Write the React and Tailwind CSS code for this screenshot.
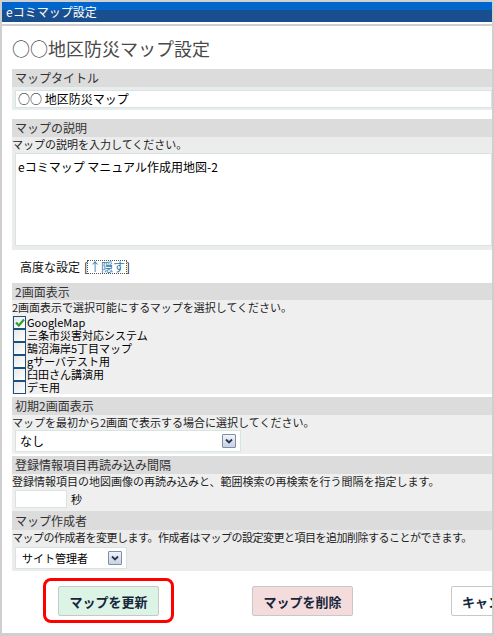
import React from "react";

const F = { fontFamily: '"Noto Sans CJK JP", "Noto Sans", sans-serif' };

function Header({ children, h = "h-[18px]" }) {
  return (
    <div className={`${h} bg-[#dcdcdc] pl-[3px] flex items-center text-[12px] leading-none text-[#333]`}>
      {children}
    </div>
  );
}

function Desc({ children, tight }) {
  return (
    <div className={`h-[15px] flex items-center text-[11px] leading-none text-[#222] whitespace-nowrap ${tight ? "tracking-[-0.5px]" : ""}`}>
      {children}
    </div>
  );
}

function Arrow() {
  return (
    <div className="w-[14px] h-[14px] border border-[#7d8ea8] bg-gradient-to-b from-[#f0f3f8] to-[#c9d2e2] flex items-center justify-center rounded-[1px]">
      <svg width="8" height="6" viewBox="0 0 8 6">
        <path d="M1 1.5 L4 4.5 L7 1.5" stroke="#2a3550" strokeWidth="1.8" fill="none" />
      </svg>
    </div>
  );
}

function Check({ checked }) {
  return (
    <div className="w-[13px] h-[13px] border border-[#1d4f80] bg-gradient-to-br from-[#e8e8e8] to-white flex items-center justify-center shrink-0">
      {checked && (
        <svg width="10" height="9" viewBox="0 0 10 9">
          <path d="M1 4.5 L3.8 7.5 L9 1.5" stroke="#2da02d" strokeWidth="2.2" fill="none" />
        </svg>
      )}
    </div>
  );
}

export default function App() {
  const maps = ["GoogleMap", "三条市災害対応システム", "鵠沼海岸5丁目マップ", "gサーバテスト用", "臼田さん講演用", "デモ用"];
  return (
    <div className="w-[494px] h-[636px] bg-[#cfcfcf] pt-[2px] px-[2px] pb-[3px]" style={F}>
      <div className="h-full bg-white flex flex-col overflow-hidden">
        <div className="h-[20px] shrink-0 bg-[linear-gradient(#0066cc_0,#0066cc_8px,#194f8e_8px,#194f8e_100%)] pl-[4px] flex items-center text-[12px] leading-none text-white">
          eコミマップ設定
        </div>
        <div className="h-[2px] shrink-0" />
        <div className="h-[2px] shrink-0 bg-[#cfcfcf]" />
        <div className="h-[43px] shrink-0 pl-[10px] flex items-center text-[18px] leading-none text-[#4a4a4a]">
          ○○地区防災マップ設定
        </div>
        <div className="pl-[10px] flex flex-col">
          {/* map title */}
          <Header>マップタイトル</Header>
          <div className="h-[23px] bg-[#e9eded] pl-[3px] pt-[3px]">
            <div className="h-[18px] bg-white border border-[#d6e4e2] pl-[2px] flex items-center text-[12px] leading-none text-black">
              ○○ 地区防災マップ
            </div>
          </div>
          <div className="h-[9px]" />
          {/* description */}
          <Header>マップの説明</Header>
          <div className="bg-[#ececec]">
            <Desc>マップの説明を入力してください。</Desc>
            <div className="pl-[3px] pt-[1px] pb-[4px]">
              <div className="h-[93px] bg-white border border-[#d6e4e2] pl-[2px] pt-[5px] text-[12px] leading-[16px] text-black">
                eコミマップ マニュアル作成用地図-2
              </div>
            </div>
          </div>
          <div className="h-[33px] pl-[8px] flex items-center text-[12px] leading-none text-[#111]">
            高度な設定 <span className="ml-[4px]">[</span>
            <span className="outline outline-1 outline-dotted outline-[#555] text-[#2a78aa] px-[1px]">↑隠す</span>
            <span>]</span>
          </div>
          {/* 2 screen */}
          <Header h="h-[17px]">2画面表示</Header>
          <div className="bg-[#efefef]">
            <Desc>2画面表示で選択可能にするマップを選択してください。</Desc>
            <div className="pt-[1px] pl-[1px] flex flex-col">
              {maps.map((m, i) => (
                <div key={m} className="h-[13px] flex items-center text-[11px] leading-[13px] text-black">
                  <Check checked={i === 0} />
                  <span className="ml-[1px]">{m}</span>
                </div>
              ))}
            </div>
          </div>
          <div className="h-[3px]" />
          {/* initial 2 screen */}
          <Header>初期2画面表示</Header>
          <div className="bg-[#efefef] h-[39px]">
            <Desc>マップを最初から2画面で表示する場合に選択してください。</Desc>
            <div className="pl-[3px]">
              <div className="w-[226px] h-[22px] bg-white border border-[#d6e4e2] pl-[4px] pr-[4px] flex items-center justify-between text-[12px] leading-none text-black">
                <span>なし</span>
                <Arrow />
              </div>
            </div>
          </div>
          <div className="h-[2px]" />
          {/* reload */}
          <Header>登録情報項目再読み込み間隔</Header>
          <div className="bg-[#efefef] h-[37px]">
            <Desc>登録情報項目の地図画像の再読み込みと、範囲検索の再検索を行う間隔を指定します。</Desc>
            <div className="pl-[3px] pt-[1px] flex items-center">
              <div className="w-[52px] h-[18px] bg-white border border-[#d6e4e2]" />
              <span className="ml-[4px] text-[11px] leading-none text-black">秒</span>
            </div>
          </div>
          {/* author */}
          <Header h="h-[19px]">マップ作成者</Header>
          <div className="bg-[#ececec] h-[41px]">
            <Desc tight>マップの作成者を変更します。作成者はマップの設定変更と項目を追加削除することができます。</Desc>
            <div className="pl-[3px] pt-[2px]">
              <div className="w-[112px] h-[22px] bg-white border border-[#d6e4e2] pl-[6px] pr-[4px] flex items-center justify-between text-[11px] leading-none text-black">
                <span>サイト管理者</span>
                <Arrow />
              </div>
            </div>
          </div>
          {/* buttons */}
          <div className="mt-[7px] pl-[31px] flex items-start whitespace-nowrap">
            <div className="shrink-0 border-[3px] border-[#ff0000] rounded-[8px] px-[12px] pt-[5px] pb-[4px]">
              <div className="w-[101px] h-[30px] bg-[#dcf4e6] border border-[#c8c8c8] rounded-[2px] flex items-center justify-center text-[13px] font-bold leading-none text-[#15263a]">
                マップを更新
              </div>
            </div>
            <div className="shrink-0 ml-[78px] mt-[8px] w-[101px] h-[30px] bg-[#f5dcdc] border border-[#c8c8c8] rounded-[2px] flex items-center justify-center text-[13px] font-bold leading-none text-[#15263a]">
              マップを削除
            </div>
            <div className="shrink-0 ml-[98px] mt-[8px] w-[101px] h-[30px] bg-white border border-[#c8c8c8] rounded-[2px] flex items-center pl-[10px] text-[13px] font-bold leading-none text-[#15263a]">
              キャンセル
            </div>
          </div>
        </div>
      </div>
    </div>
  );
}
